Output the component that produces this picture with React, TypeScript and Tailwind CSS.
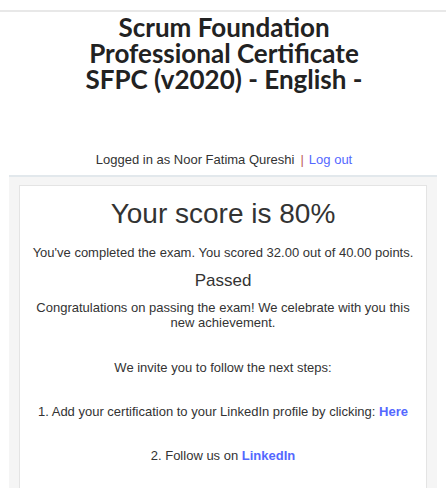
import React from 'react'

export default function App() {
  return (
    <div className="w-[448px] h-[488px] overflow-hidden bg-white text-[#333] font-['Liberation_Sans',Arial,sans-serif]">
      <div className="h-[10px]" />
      <div className="border-t-2 border-[#e8e8e8] w-[446px]" />

      {/* Title */}
      <h1 className="mt-[2px] text-center font-['Lato',sans-serif] font-bold text-[26px] leading-[26px] text-[#222]">
        Scrum Foundation
        <br />
        Professional Certificate
        <br />
        SFPC (v2020) - English -
      </h1>

      {/* Login bar */}
      <div className="mt-[60px] text-center text-[13px] leading-[16px]">
        Logged in as Noor Fatima Qureshi
        <span className="ml-[6px] mr-[5px] text-[#c0605a]">|</span>
        <a className="text-[#5468ff]">Log out</a>
      </div>

      {/* Result panel */}
      <div className="mt-[7px] mx-[9px] w-[428px] border-t-2 border-[#e2e8ec] bg-[#f5f5f5] px-[10px] pt-[8px] h-[400px]">
        <div className="bg-white border border-[#e4e4e4] h-[400px] px-[12px] pt-[11px] text-center">
          <h2 className="text-[28px] leading-[34px]">Your score is 80%</h2>
          <p className="mt-[14px] text-[13px] leading-[16px]">
            You've completed the exam. You scored 32.00 out of 40.00 points.
          </p>
          <p className="mt-[10px] text-[17px] leading-[20px]">Passed</p>
          <p className="mt-[9px] text-[13px] leading-[15px]">
            Congratulations on passing the exam! We celebrate with you this new achievement.
          </p>
          <p className="mt-[30px] text-[13px] leading-[16px]">We invite you to follow the next steps:</p>
          <p className="mt-[28px] text-[13px] leading-[16px]">
            1. Add your certification to your LinkedIn profile by clicking:{' '}
            <a className="font-bold text-[#5468ff]">Here</a>
          </p>
          <p className="mt-[28px] text-[13px] leading-[16px]">
            2. Follow us on <a className="font-bold text-[#5468ff]">LinkedIn</a>
          </p>
        </div>
      </div>
    </div>
  )
}
